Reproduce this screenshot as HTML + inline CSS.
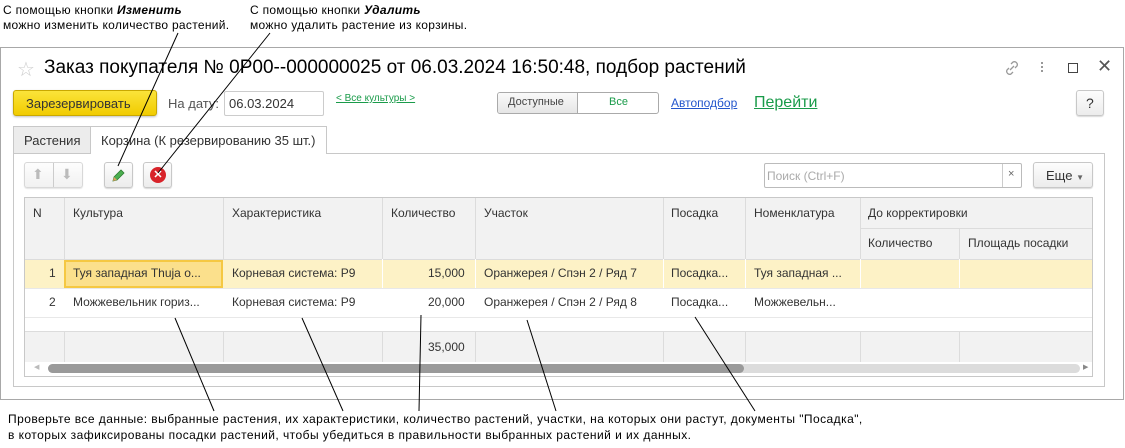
<!DOCTYPE html>
<html><head><meta charset="utf-8"><style>
*{box-sizing:border-box;margin:0;padding:0}
body{width:1125px;height:448px;background:#fff;font-family:"Liberation Sans",Arial,sans-serif;font-size:12px;color:#333;position:relative;overflow:hidden}
.a{position:absolute}
.t{position:absolute;white-space:nowrap}
.btn{position:absolute;border:1px solid #c8c8c8;border-radius:3px;background:linear-gradient(#fdfdfd,#ececec);box-shadow:0 1px 1px rgba(0,0,0,.15)}
.h{background:#f2f2f2}
.vl{position:absolute;width:1px;background:#dcdcdc}
.hl{position:absolute;height:1px;background:#dcdcdc}
</style></head><body>
<div class="t" style="left:3px;top:3px;color:#000;line-height:15px;letter-spacing:.3px">С помощью кнопки <b><i>Изменить</i></b><br>можно изменить количество растений.</div>
<div class="t" style="left:250px;top:3px;color:#000;line-height:15px;letter-spacing:.3px">С помощью кнопки <b><i>Удалить</i></b><br>можно удалить растение из корзины.</div>

<div class="a" style="left:0;top:47px;width:1124px;height:353px;border:1px solid #a8a8a8;border-right-color:#a8a8a8"></div>
<div class="t" style="left:17px;top:57px;font-size:20px;color:#ccc">☆</div>
<div class="t" style="left:44px;top:57px;font-size:19px;color:#000">Заказ покупателя № 0Р00--000000025 от 06.03.2024 16:50:48, подбор растений</div>
<svg class="a" style="left:1003px;top:59px" width="18" height="18" viewBox="0 0 18 18"><g fill="none" stroke="#999" stroke-width="1.3"><path d="M8 5l2-2a3 3 0 0 1 4 4l-2 2M10 13l-2 2a3 3 0 0 1-4-4l2-2M7 11l4-4"/></g></svg>
<div class="a" style="left:1041px;top:62px;width:2px;height:2px;background:#999;box-shadow:0 4px #999,0 8px #999"></div>
<div class="a" style="left:1068px;top:63px;width:10px;height:10px;border:1px solid #444"></div>
<div class="t" style="left:1097px;top:56px;font-size:18px;color:#555">✕</div>

<div class="a" style="left:13px;top:90px;width:144px;height:26px;border:1px solid #c9a800;border-radius:3px;background:linear-gradient(#fbe43a,#f1cc00);box-shadow:0 1px 2px rgba(0,0,0,.25)"></div>
<div class="t" style="left:26px;top:96px;font-size:13px;color:#333">Зарезервировать</div>
<div class="t" style="left:168px;top:96px;font-size:13px;color:#555">На дату:</div>
<div class="a" style="left:224px;top:91px;width:100px;height:25px;border:1px solid #ccc;border-radius:2px"></div>
<div class="t" style="left:229px;top:96px;font-size:13px;color:#333">06.03.2024</div>
<div class="t" style="left:336px;top:93px;font-size:10px;color:#1a9b4a;text-decoration:underline">&lt; Все культуры &gt;</div>
<div class="a" style="left:497px;top:92px;width:162px;height:22px;border:1px solid #aaa;border-radius:3px;background:#fff;overflow:hidden"><div style="width:80px;height:100%;background:linear-gradient(#fafafa,#e6e6e6);border-right:1px solid #aaa"></div></div>
<div class="t" style="left:508px;top:96px;font-size:11px;color:#444">Доступные</div>
<div class="t" style="left:609px;top:96px;font-size:11px;color:#1a9b4a">Все</div>
<div class="t" style="left:671px;top:96px;font-size:12px;color:#2255cc;text-decoration:underline">Автоподбор</div>
<div class="t" style="left:754px;top:94px;font-size:16px;color:#1a9b4a;text-decoration:underline">Перейти</div>
<div class="btn" style="left:1076px;top:90px;width:28px;height:26px"></div>
<div class="t" style="left:1086px;top:95px;font-size:14px;color:#333">?</div>

<div class="a" style="left:13px;top:126px;width:78px;height:28px;border:1px solid #c8c8c8;background:#ececec"></div>
<div class="t" style="left:24px;top:133px;font-size:13px">Растения</div>
<div class="a" style="left:90px;top:126px;width:237px;height:28px;border:1px solid #c8c8c8;border-bottom:none;background:#fff;z-index:2"></div>
<div class="t" style="left:101px;top:133px;font-size:13px;z-index:3">Корзина (К резервированию 35 шт.)</div>
<div class="a" style="left:13px;top:153px;width:1092px;height:234px;border:1px solid #c8c8c8"></div>

<div class="btn" style="left:24px;top:162px;width:59px;height:26px;opacity:.7"></div>
<div class="vl" style="left:53px;top:163px;height:24px;background:#ccc"></div>
<div class="t" style="left:32px;top:166px;color:#bbb;font-size:14px">⬆</div>
<div class="t" style="left:61px;top:166px;color:#bbb;font-size:14px">⬇</div>
<div class="btn" style="left:104px;top:162px;width:29px;height:26px"></div>
<svg class="a" style="left:111px;top:168px" width="15" height="15" viewBox="0 0 15 15"><path d="M2 13l1-4 7-7 3 3-7 7z" fill="#4caf50" stroke="#2e7d32" stroke-width=".8"/><path d="M2 13l1-4 3 3z" fill="#e0a060"/></svg>
<div class="btn" style="left:143px;top:162px;width:29px;height:26px"></div>
<div class="a" style="left:150px;top:167px;width:16px;height:16px;border-radius:50%;background:#d8232a;color:#fff;font-size:11px;font-weight:bold;text-align:center;line-height:16px">✕</div>

<div class="a" style="left:764px;top:163px;width:258px;height:25px;border:1px solid #bbb;border-radius:2px"></div>
<div class="vl" style="left:1002px;top:164px;height:23px;background:#ccc"></div>
<div class="t" style="left:767px;top:169px;color:#aaa">Поиск (Ctrl+F)</div>
<div class="t" style="left:1008px;top:168px;color:#666;font-size:11px">×</div>
<div class="btn" style="left:1033px;top:162px;width:60px;height:26px"></div>
<div class="t" style="left:1046px;top:168px;font-size:13px">Еще <span style="font-size:8px;color:#666">▼</span></div>

<!-- table -->
<div class="a" style="left:24px;top:197px;width:1069px;height:180px;border:1px solid #c8c8c8;background:#fff"></div>
<div class="a h" style="left:25px;top:198px;width:1067px;height:61px"></div>
<div class="a" style="left:25px;top:259px;width:1067px;height:29px;background:#fdf2c6"></div>
<div class="a h" style="left:25px;top:332px;width:1067px;height:30px"></div>
<div class="hl" style="left:25px;top:259px;width:1067px"></div>
<div class="hl" style="left:25px;top:288px;width:1067px;background:#e8e8e8"></div>
<div class="hl" style="left:25px;top:317px;width:1067px;background:#e8e8e8"></div>
<div class="hl" style="left:25px;top:331px;width:1067px"></div>
<div class="hl" style="left:860px;top:228px;width:232px"></div>
<div class="vl" style="left:64px;top:198px;height:61px"></div><div class="vl" style="left:64px;top:332px;height:30px"></div>
<div class="vl" style="left:223px;top:198px;height:61px"></div><div class="vl" style="left:223px;top:332px;height:30px"></div>
<div class="vl" style="left:382px;top:198px;height:61px"></div><div class="vl" style="left:382px;top:332px;height:30px"></div>
<div class="vl" style="left:475px;top:198px;height:61px"></div><div class="vl" style="left:475px;top:332px;height:30px"></div>
<div class="vl" style="left:663px;top:198px;height:61px"></div><div class="vl" style="left:663px;top:332px;height:30px"></div>
<div class="vl" style="left:745px;top:198px;height:61px"></div><div class="vl" style="left:745px;top:332px;height:30px"></div>
<div class="vl" style="left:860px;top:198px;height:61px"></div><div class="vl" style="left:860px;top:332px;height:30px"></div>
<div class="vl" style="left:959px;top:228px;height:31px"></div><div class="vl" style="left:959px;top:332px;height:30px"></div>
<div class="vl" style="left:382px;top:259px;height:29px;background:#fff"></div><div class="vl" style="left:475px;top:259px;height:29px;background:#fff"></div>
<div class="vl" style="left:663px;top:259px;height:29px;background:#fff"></div><div class="vl" style="left:745px;top:259px;height:29px;background:#fff"></div>
<div class="vl" style="left:860px;top:259px;height:29px;background:#fff"></div><div class="vl" style="left:959px;top:259px;height:29px;background:#fff"></div>
<div class="a" style="left:64px;top:260px;width:159px;height:28px;border:2px solid #f5c842;background:#fbe08c"></div>

<div class="t" style="left:33px;top:206px">N</div>
<div class="t" style="left:73px;top:206px">Культура</div>
<div class="t" style="left:232px;top:206px">Характеристика</div>
<div class="t" style="left:391px;top:206px">Количество</div>
<div class="t" style="left:484px;top:206px">Участок</div>
<div class="t" style="left:671px;top:206px">Посадка</div>
<div class="t" style="left:754px;top:206px">Номенклатура</div>
<div class="t" style="left:868px;top:206px">До корректировки</div>
<div class="t" style="left:868px;top:236px">Количество</div>
<div class="t" style="left:968px;top:236px">Площадь посадки</div>

<div class="t" style="left:49px;top:266px">1</div>
<div class="t" style="left:73px;top:266px">Туя западная Thuja o...</div>
<div class="t" style="left:232px;top:266px">Корневая система: Р9</div>
<div class="t" style="left:428px;top:266px">15,000</div>
<div class="t" style="left:484px;top:266px">Оранжерея / Спэн 2 / Ряд 7</div>
<div class="t" style="left:671px;top:266px">Посадка...</div>
<div class="t" style="left:754px;top:266px">Туя западная ...</div>
<div class="t" style="left:49px;top:295px">2</div>
<div class="t" style="left:73px;top:295px">Можжевельник гориз...</div>
<div class="t" style="left:232px;top:295px">Корневая система: Р9</div>
<div class="t" style="left:428px;top:295px">20,000</div>
<div class="t" style="left:484px;top:295px">Оранжерея / Спэн 2 / Ряд 8</div>
<div class="t" style="left:671px;top:295px">Посадка...</div>
<div class="t" style="left:754px;top:295px">Можжевельн...</div>
<div class="t" style="left:428px;top:340px">35,000</div>

<div class="a" style="left:25px;top:362px;width:1067px;height:14px;background:#fff"></div>
<div class="a" style="left:48px;top:364px;width:1032px;height:9px;border-radius:5px;background:#dcdcdc"></div>
<div class="a" style="left:48px;top:364px;width:696px;height:9px;border-radius:5px;background:#9a9a9a"></div>
<div class="t" style="left:34px;top:363px;font-size:7px;color:#bbb">◀</div>
<div class="t" style="left:1083px;top:363px;font-size:7px;color:#888">▶</div>

<div class="t" style="left:8px;top:411px;color:#000;line-height:16px;letter-spacing:.45px">Проверьте все данные: выбранные растения, их характеристики, количество растений, участки, на которых они растут, документы "Посадка",<br>в которых зафиксированы посадки растений, чтобы убедиться в правильности выбранных растений и их данных.</div>

<svg class="a" style="left:0;top:0;z-index:10" width="1125" height="448"><g stroke="#000" stroke-width="1" fill="none">
<path d="M178 33L118 166"/><path d="M270 33L158 173"/>
<path d="M175 318L214 411"/><path d="M302 318L343 411"/><path d="M421 315L419 411"/><path d="M527 320L556 411"/><path d="M695 317L755 411"/>
</g></svg>
</body></html>
